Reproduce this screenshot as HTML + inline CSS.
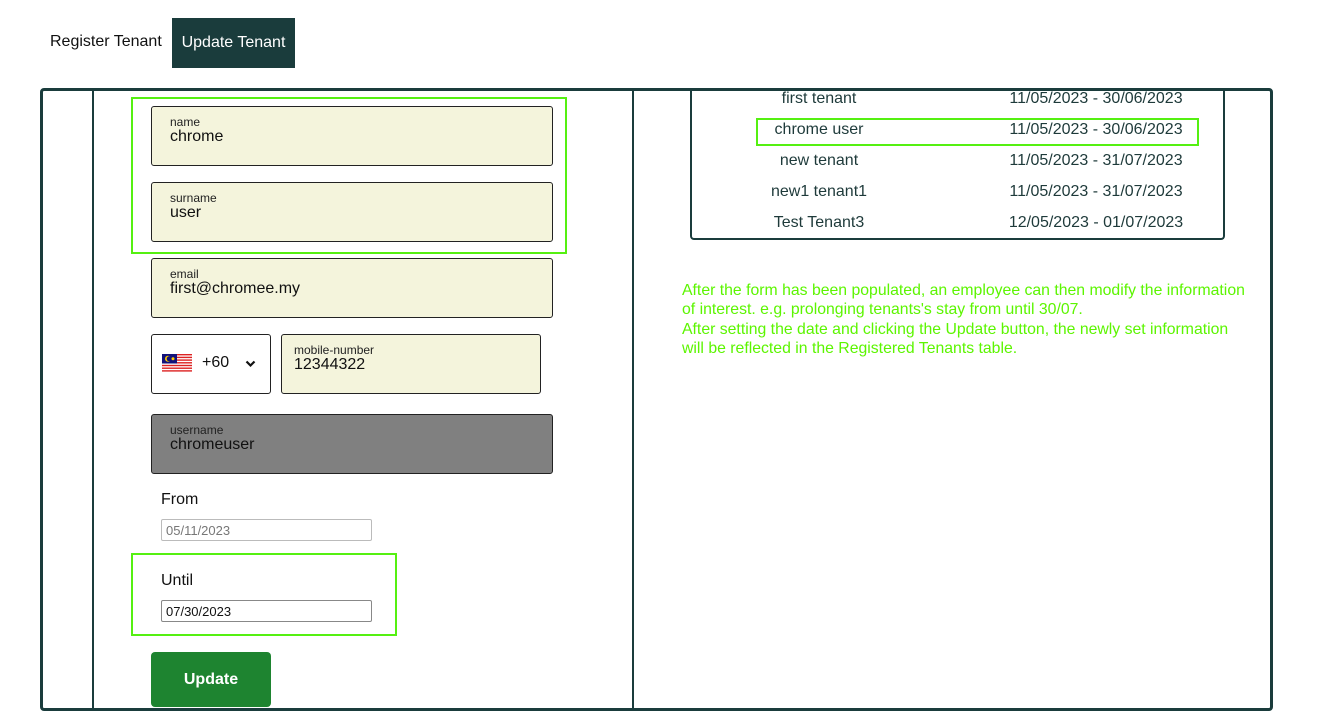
<!DOCTYPE html><html><head><style>
*{margin:0;padding:0;box-sizing:border-box}
body{width:1322px;height:717px;background:#fff;font-family:"Liberation Sans",sans-serif;position:relative;overflow:hidden;color:#111}
.a{position:absolute}
.f{position:absolute;left:151px;width:402px;height:60px;background:#f4f4dc;border:1px solid #222;border-radius:3px}
.f .l{position:absolute;left:18px;top:8px;font-size:12px;color:#222}
.f .v{position:absolute;left:18px;top:20px;font-size:16px;color:#111}
.g{position:absolute;border:2px solid #55f011}
.r{position:absolute;font-size:16px;color:#1e3a3a;transform:translateX(-50%);white-space:nowrap}
.d{position:absolute;left:161px;width:211px;height:22px;border:1px solid #bbb;border-radius:2px;font-size:13px;padding:3px 4px}
</style></head><body>
<div class="a" style="left:50px;top:33px;font-size:16px">Register Tenant</div>
<div class="a" style="left:172px;top:18px;width:123px;height:50px;background:#1a3c3c;color:#fff;font-size:16px;line-height:50px;text-align:center">Update Tenant</div>
<div class="a" style="left:690px;top:88px;width:535px;height:152px;border:2px solid #1a3c3c;border-top:none;border-radius:0 0 4px 4px"></div>
<div class="a" style="left:40px;top:88px;width:1233px;height:623px;border:3px solid #1a3c3c;border-radius:4px"></div>
<div class="a" style="left:92px;top:90px;width:2px;height:618px;background:#1a3c3c"></div>
<div class="a" style="left:632px;top:90px;width:2px;height:618px;background:#1a3c3c"></div>

<div class="f" style="top:106px"><div class="l">name</div><div class="v" style="top:21px">chrome</div></div>
<div class="f" style="top:182px"><div class="l">surname</div><div class="v" style="top:21px">user</div></div>
<div class="g" style="left:131px;top:97px;width:436px;height:157px"></div>
<div class="f" style="top:258px"><div class="l">email</div><div class="v" style="top:21px">first@chromee.my</div></div>
<div class="a" style="left:151px;top:334px;width:120px;height:60px;border:1px solid #222;border-radius:3px;background:#fff">
 <svg class="a" style="left:10px;top:19px" width="30" height="19" viewBox="0 0 30 19">
  <rect width="30" height="19" fill="#fff"/>
  <g fill="#d22"><rect y="0" width="30" height="1.4"/><rect y="2.7" width="30" height="1.4"/><rect y="5.4" width="30" height="1.4"/><rect y="8.1" width="30" height="1.4"/><rect y="10.8" width="30" height="1.4"/><rect y="13.5" width="30" height="1.4"/><rect y="16.2" width="30" height="1.4"/></g>
  <rect width="15" height="9.5" fill="#12127a"/><circle cx="6" cy="4.8" r="3" fill="#fc0"/><circle cx="7.2" cy="4.8" r="2.5" fill="#12127a"/><circle cx="11" cy="4.8" r="1.5" fill="#fc0"/>
 </svg>
 <div class="a" style="left:50px;top:19px;font-size:16px">+60</div>
 <svg class="a" style="left:93px;top:25px" width="11" height="8" viewBox="0 0 11 8"><path d="M1.5 1.5L5.5 5.5L9.5 1.5" stroke="#111" stroke-width="2.2" fill="none"/></svg>
</div>
<div class="f" style="left:281px;top:334px;width:260px"><div class="l" style="left:12px">mobile-number</div><div class="v" style="left:12px;top:21px">12344322</div></div>
<div class="f" style="top:414px;background:#808080"><div class="l">username</div><div class="v" style="top:21px">chromeuser</div></div>
<div class="a" style="left:161px;top:491px;font-size:16px">From</div>
<div class="d" style="top:519px;color:#777">05/11/2023</div>
<div class="a" style="left:161px;top:572px;font-size:16px">Until</div>
<div class="d" style="top:600px;border-color:#888;color:#111">07/30/2023</div>
<div class="g" style="left:131px;top:553px;width:266px;height:83px"></div>
<div class="a" style="left:151px;top:652px;width:120px;height:55px;background:#1e8430;border-radius:4px;color:#fff;font-weight:bold;font-size:16px;line-height:55px;text-align:center">Update</div>

<div class="r" style="left:819px;top:90px">first tenant</div><div class="r" style="left:1096px;top:90px">11/05/2023 - 30/06/2023</div>
<div class="r" style="left:819px;top:121px">chrome user</div><div class="r" style="left:1096px;top:121px">11/05/2023 - 30/06/2023</div>
<div class="r" style="left:819px;top:152px">new tenant</div><div class="r" style="left:1096px;top:152px">11/05/2023 - 31/07/2023</div>
<div class="r" style="left:819px;top:183px">new1 tenant1</div><div class="r" style="left:1096px;top:183px">11/05/2023 - 31/07/2023</div>
<div class="r" style="left:819px;top:214px">Test Tenant3</div><div class="r" style="left:1096px;top:214px">12/05/2023 - 01/07/2023</div>
<div class="g" style="left:756px;top:118px;width:443px;height:28px"></div>

<div class="a" style="left:682px;top:281px;width:600px;font-size:15.8px;line-height:19.3px;color:#5cf500;white-space:nowrap">After the form has been populated, an employee can then modify the information<br>of interest. e.g. prolonging tenants's stay from until 30/07.<br>After setting the date and clicking the Update button, the newly set information<br>will be reflected in the Registered Tenants table.</div>
</body></html>
